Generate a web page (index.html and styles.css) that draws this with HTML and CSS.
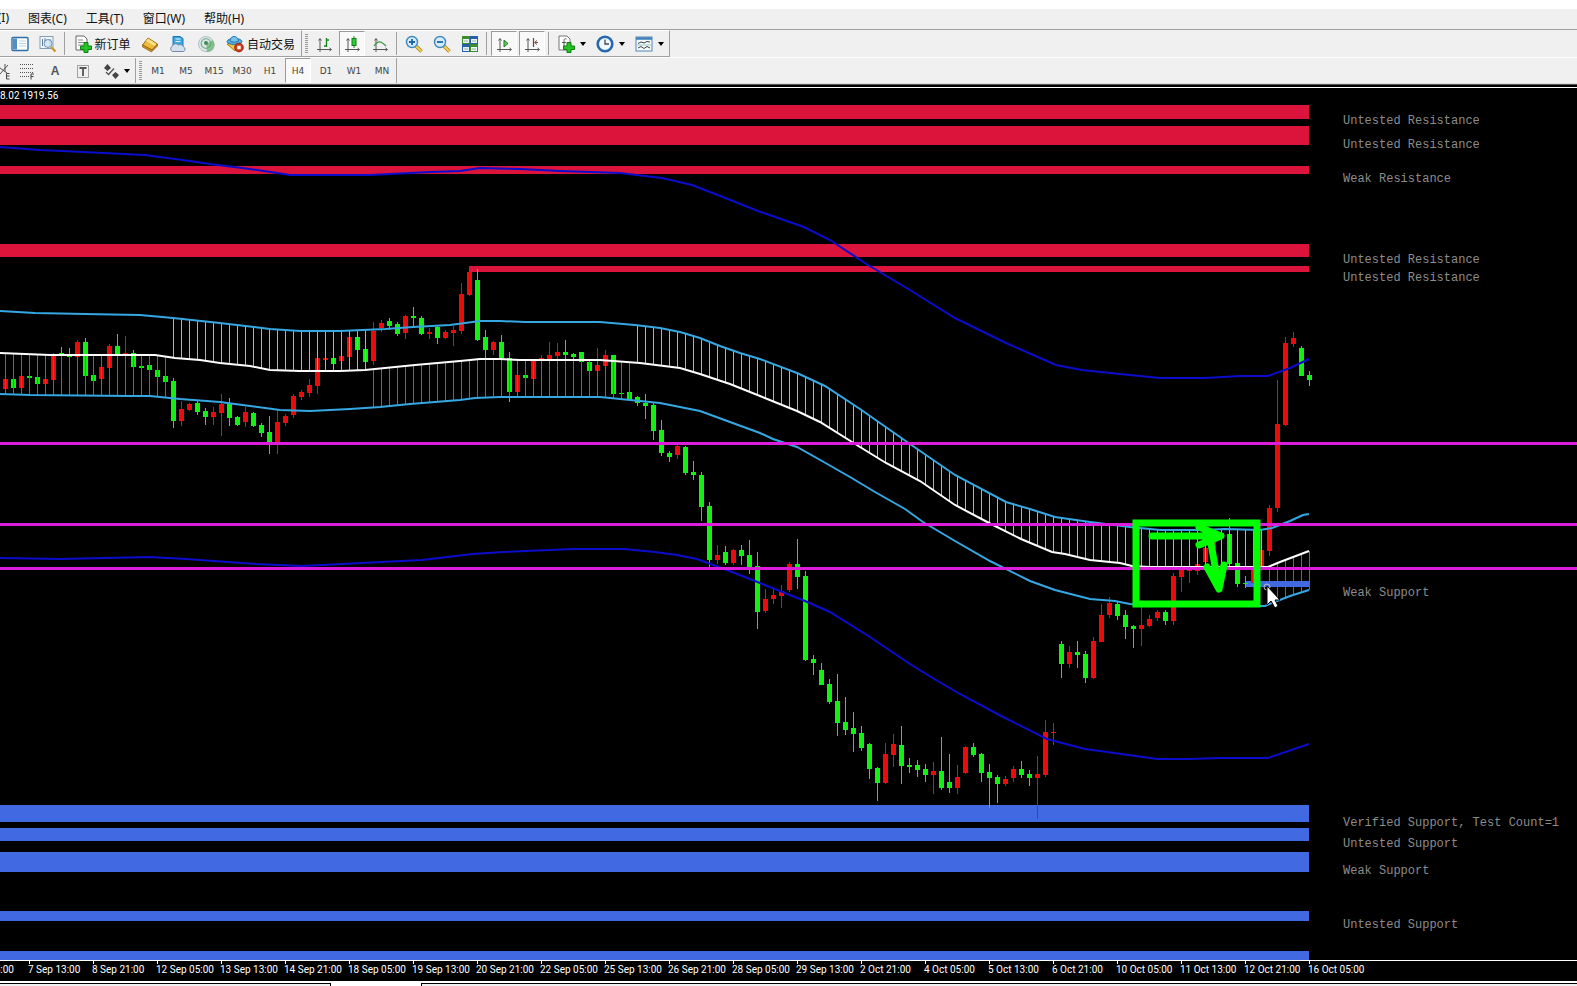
FILE: index.html
```html
<!DOCTYPE html>
<html lang="zh-CN">
<head>
<meta charset="utf-8">
<title>Chart</title>
<link rel="stylesheet" href="styles.css">
</head>
<body>
<div class="titlebar"></div>
<nav class="menu">
  <button class="menu-item menu-cut">(I)</button>
  <button class="menu-item">图表(C)</button>
  <button class="menu-item">工具(T)</button>
  <button class="menu-item">窗口(W)</button>
  <button class="menu-item">帮助(H)</button>
</nav>
<div class="bar">
  <div class="group group-main">
    <button class="tool" aria-label="Navigator"><svg viewBox="0 0 18 18"><rect x="1" y="2.500" width="16" height="13" rx="1" fill="#fff" stroke="#2f6ea5" stroke-width="1.400"/><rect x="2" y="3.500" width="4" height="11" fill="#4f8fc4"/><path d="M8 6h7M8 8.500h7M8 11h7" stroke="#b9d3e8"/></svg></button>
    <button class="tool" aria-label="Strategy tester"><svg viewBox="0 0 18 18"><rect x="1" y="1.500" width="13" height="12" fill="#f4f8fb" stroke="#7f9db5"/><path d="M3.500 4v7M6 3v5M11 4v7" stroke="#5d7f9c"/><circle cx="9" cy="8.500" r="4" fill="#cfe4f3" fill-opacity=".8" stroke="#6a94b3"/><path d="M12 12l4.500 4.500" stroke="#c9982c" stroke-width="2.400"/></svg></button>
    <span class="sep"></span>
    <button class="tool tool-text"><svg viewBox="0 0 18 18"><path d="M2 1h8l3 3v11H2z" fill="#fff" stroke="#666"/><path d="M4 5h5M4 7.500h7M4 10h5" stroke="#8a8a8a"/><path d="M10 7.500h4v3.500h3.500v3.500H14v3h-4v-3H6.500V11H10z" fill="#25c425" stroke="#0d7d14"/></svg><span>新订单</span></button>
    <button class="tool" aria-label="MetaEditor"><svg viewBox="0 0 18 18"><path d="M1.500 10L7 3l9.500 6-5.500 6z" fill="#edba3a" stroke="#9c6a12"/><path d="M7 3.500l8.500 5.500-2 2L5 6z" fill="#ffe28a"/><path d="M1.500 10v2l9 5 6-6V9L11 15z" fill="#c98a1c" stroke="#8a5c10" stroke-width=".6"/></svg></button>
    <button class="tool" aria-label="Data center"><svg viewBox="0 0 18 18"><path d="M4 1.500h7l3 2V11H4z" fill="#3aa5e3" stroke="#1d76b0"/><path d="M6.500 4h5M6.500 6.500h5" stroke="#e8f6ff"/><path d="M3.500 16.500a3 3 0 0 1 0-5.500 3.500 3.500 0 0 1 6-1 3.500 3.500 0 0 1 5 2 2.400 2.400 0 0 1 0 4.500z" fill="#d5e0ee" stroke="#7288a8"/></svg></button>
    <button class="tool" aria-label="Signals"><svg viewBox="0 0 18 18"><circle cx="9" cy="9" r="7.500" fill="#dfe9e6" stroke="#a9bfc9"/><circle cx="9" cy="8.500" r="4.800" fill="none" stroke="#7fae9a" stroke-width="1.300"/><path d="M9 8l1 9a7 7 0 0 0 5.500-12A8 8 0 0 1 9 8z" fill="#57a85c" opacity=".6"/><circle cx="9" cy="8" r="2" fill="#3d8c58"/></svg></button>
    <button class="tool tool-text"><svg viewBox="0 0 18 18"><path d="M1 9l8 7 6-6-5-3z" fill="#f0c340" stroke="#aa7b17"/><ellipse cx="8.500" cy="6.500" rx="7.500" ry="3" fill="#55aee0" stroke="#2674ab"/><path d="M4 6c0-6 8-6 8.500 0-2 1.500-6.500 1.500-8.500 0z" fill="#74c4ee" stroke="#2674ab"/><circle cx="13" cy="12.500" r="4.300" fill="#d33a1e" stroke="#96200c"/><rect x="11.300" y="10.800" width="3.400" height="3.400" fill="#fff"/></svg><span>自动交易</span></button>
  </div>
  <div class="group">
    <span class="grip"></span>
    <button class="tool" aria-label="Bar chart"><svg viewBox="0 0 18 18"><path d="M5 4v13M2 14.500h14M3.500 5.500L5 3.500l1.500 2M14.500 13l2 1.500-2 1.500" fill="none" stroke="#555"/><path d="M11.500 3v9M9 11h2.500M11.500 5H14" fill="none" stroke="#16891c" stroke-width="1.400"/></svg></button>
    <button class="tool pressed" aria-label="Candlesticks"><svg viewBox="0 0 18 18"><path d="M5 4v13M2 14.500h14M3.500 5.500L5 3.500l1.500 2M14.500 13l2 1.500-2 1.500" fill="none" stroke="#555"/><path d="M11 1v12" stroke="#16891c"/><rect x="9" y="3.500" width="4" height="7" fill="#2bd035" stroke="#0e7c14"/></svg></button>
    <button class="tool" aria-label="Line chart"><svg viewBox="0 0 18 18"><path d="M5 4v13M2 14.500h14M3.500 5.500L5 3.500l1.500 2M14.500 13l2 1.500-2 1.500" fill="none" stroke="#555"/><path d="M3 11c4-6 7-5 12 0" fill="none" stroke="#3b9a40" stroke-width="1.300"/></svg></button>
    <span class="sep"></span>
    <button class="tool" aria-label="Zoom in"><svg viewBox="0 0 18 18"><path d="M11 11l5.500 5.500" stroke="#a8801c" stroke-width="3.600"/><path d="M11 11l5.500 5.500" stroke="#f3d154" stroke-width="2"/><circle cx="7" cy="7" r="5.500" fill="#d4ecfb" stroke="#3f87bd" stroke-width="1.400"/><path d="M4 7h6M7 4v6" stroke="#1c66a8" stroke-width="1.800"/></svg></button>
    <button class="tool" aria-label="Zoom out"><svg viewBox="0 0 18 18"><path d="M11 11l5.500 5.500" stroke="#a8801c" stroke-width="3.600"/><path d="M11 11l5.500 5.500" stroke="#f3d154" stroke-width="2"/><circle cx="7" cy="7" r="5.500" fill="#d4ecfb" stroke="#3f87bd" stroke-width="1.400"/><path d="M4 7h6" stroke="#1c66a8" stroke-width="1.800"/></svg></button>
    <button class="tool" aria-label="Tile windows"><svg viewBox="0 0 18 18"><path d="M1 1h8v8H1zM9 9h8v8H9z" fill="#3e8c2c"/><path d="M9 1h8v8H9zM1 9h8v8H1z" fill="#2560a8"/><path d="M2 4h6v4H2zM10 4h6v4h-6zM2 12h6v4H2zM10 12h6v4h-6z" fill="#e9f3fa"/><path d="M3 6h4M11 6h4M3 14h4M11 14h4" stroke="#8fb88a"/></svg></button>
    <span class="sep"></span>
    <button class="tool pressed" aria-label="Auto scroll"><svg viewBox="0 0 18 18"><path d="M5 4v13M2 14.500h14M3.500 5.500L5 3.500l1.500 2M14.500 13l2 1.500-2 1.500" fill="none" stroke="#555"/><path d="M9 5l4 3.500L9 12z" fill="#5ccb61" stroke="#1d7f22"/></svg></button>
    <button class="tool pressed" aria-label="Chart shift"><svg viewBox="0 0 18 18"><path d="M5 4v13M2 14.500h14M3.500 5.500L5 3.500l1.500 2M14.500 13l2 1.500-2 1.500" fill="none" stroke="#555"/><path d="M10.500 3v9" stroke="#555" stroke-width="1.300"/><path d="M15 7.500h-3M14 5.500l-2.500 2L14 9.500" fill="none" stroke="#8c4a38"/></svg></button>
    <span class="sep"></span>
    <button class="tool tool-drop" aria-label="Indicators"><svg viewBox="0 0 18 18"><path d="M2 1h8l3 3v11H2z" fill="#fff" stroke="#777"/><path d="M9.500 4C7 3 7 5 7 7v5M5 7.500h4" fill="none" stroke="#555"/><path d="M10 7.500h4v3.500h3.500v3.500H14v3h-4v-3H6.500V11H10z" fill="#25c425" stroke="#0d7d14"/></svg><i class="caret"></i></button>
    <button class="tool tool-drop" aria-label="Periods"><svg viewBox="0 0 18 18"><circle cx="9" cy="9" r="7.300" fill="#f2f7fb" stroke="#2468ad" stroke-width="2.600"/><path d="M9 4.500V9h4" fill="none" stroke="#445" stroke-width="1.300"/></svg><i class="caret"></i></button>
    <button class="tool tool-drop" aria-label="Templates"><svg viewBox="0 0 18 18"><rect x="1" y="2" width="16" height="14" fill="#f6fafd" stroke="#4e86b5"/><path d="M1 3.500h16" stroke="#3f7fb8" stroke-width="2.500"/><path d="M3 8.500l3-1.500 3 1 3-1.500 3 .5M3 13l3-1.500 3 2 3-2 3 1.500" fill="none" stroke="#444"/><path d="M2 10h14" stroke="#9cb"/></svg><i class="caret"></i></button>
  </div>
</div>
<div class="bar bar-second">
  <div class="group group-lines">
    <button class="tool tool-half" aria-label="Channel"><svg viewBox="0 0 18 18"><path d="M6 12l8-9M6 6l7 5M11 2v8" stroke="#555" fill="none"/><path d="M15.500 11.500h-3v5.500h3M12.500 14h3" fill="none" stroke="#444"/></svg></button>
    <button class="tool" aria-label="Fibonacci"><svg viewBox="0 0 18 18"><path d="M2 2.500h14M2 6.500h14M2 10.500h14M2 14.500h9" stroke="#555" stroke-dasharray="1 1"/><path d="M16 12h-3v5.500M13 14.500h2.500" fill="none" stroke="#444"/></svg></button>
    <button class="tool letter">A</button>
    <button class="tool" aria-label="Text label"><svg viewBox="0 0 18 18"><rect x="3.500" y="3.500" width="11" height="12" fill="none" stroke="#555" stroke-dasharray="1 1"/><path d="M5.500 6h7M9 6v8" fill="none" stroke="#555" stroke-width="1.800"/></svg></button>
    <button class="tool tool-drop" aria-label="Arrows"><svg viewBox="0 0 18 18"><path d="M2 6l3.500-4L9 6 5.500 9zM10 13l3.500-3 3.500 3-3.500 4z" fill="#444"/><path d="M4 10l2.500 2.500L12 6.500" stroke="#555" stroke-width="1.300" fill="none"/></svg><i class="caret"></i></button>
  </div>
  <div class="group group-time">
    <span class="grip"></span>
    <button class="tool">M1</button><button class="tool">M5</button><button class="tool">M15</button><button class="tool">M30</button><button class="tool">H1</button><button class="tool pressed">H4</button><button class="tool">D1</button><button class="tool">W1</button><button class="tool">MN</button>
  </div>
</div>
<main class="chart">
  <svg class="plot" id="plot" viewBox="0 88 1577 893" role="img" aria-label="H4 price chart"></svg>
</main>
<footer class="tabs"><div class="tab tab-first"></div><div class="tab tab-rest"></div></footer>
<script src="chart.js"></script>
</body>
</html>
```
FILE: styles.css
```css
* { box-sizing: border-box; }
body {
  margin: 0;
  min-height: 100vh;
  display: flex;
  flex-direction: column;
  overflow-x: hidden;
  background: #f0f0f0;
  color: #111;
  font-family: "Noto Sans", "Noto Sans CJK SC", sans-serif;
  font-size: 12px;
}
button {
  border: 1px solid transparent;
  margin: 0;
  padding: 0;
  background: none;
  color: inherit;
  font: inherit;
}
.titlebar { height: 9px; background: #fff; }
.menu {
  display: flex;
  gap: 19px;
  height: 21px;
  border-bottom: 1px solid #a0a0a0;
}
.menu-item { line-height: 18px; border: 0; white-space: nowrap; }
.menu-cut { width: 9px; display: flex; justify-content: flex-end; }
.bar {
  display: flex;
  height: 27px;
}
.bar-second {
  border-top: 1px solid #fff;
  border-bottom: 1px solid #ddd;
}
.group {
  display: flex;
  align-items: stretch;
  border-right: 1px solid #a0a0a0;
  border-bottom: 1px solid #a0a0a0;
  border-top: 1px solid #fff;
}
.bar-second .group { border-top: 0; border-bottom: 0; }
.group-main { width: 302px; padding-left: 6px; }
.group-lines { width: 136px; }
.tool {
  width: 28px;
  display: flex;
  align-items: center;
  justify-content: center;
  white-space: nowrap;
}
.tool svg { width: 18px; height: 18px; flex: none; }
.tool-text { width: auto; gap: 3px; padding: 0 5px; }
.tool-drop { width: 39px; gap: 5px; }
.tool-half { width: 13px; justify-content: flex-end; }
.group-lines .tool-drop { gap: 4px; width: 38px; }
.letter { font: bold 12px "Liberation Sans", sans-serif; color: #555; }
.pressed {
  width: 26px;
  margin: 0 1px;
  border-color: #999 #fff #fff #999;
  background: #f9f9f9;
}
.group-time .tool { font: 9px "DejaVu Sans", sans-serif; color: #444; }
.caret {
  border: 3px solid transparent;
  border-top: 4px solid #000;
  border-bottom: 0;
}
.sep { width: 1px; margin: 1px 3px 1px 2px; background: #a0a0a0; }
.grip {
  width: 3px;
  margin: 3px 2px 3px 3px;
  background: repeating-linear-gradient(#999 0 1px, #f0f0f0 1px 2px);
}
.chart {
  border-top: 1px solid #555;
  background: #000;
  padding-top: 2px;
}
.plot {
  display: block;
  width: 100%;
  height: auto;
  border-top: 1px solid #fff;
}
.tabs {
  display: flex;
  flex: 1;
  gap: 90px;
  min-height: 5px;
  padding-top: 2px;
  background: #fff;
}
.tab { border-top: 1px solid #000; background: #f0f0f0; }
.tab-first { width: 21%; border-right: 1px solid #000; }
.tab-rest { flex: 1; border-left: 1px solid #000; }
.band, .hline, .hatch, .candle { shape-rendering: crispEdges; }
.resistance { fill: #dc143c; }
.support { fill: #4169e1; }
.hline { fill: #dc1edc; }
.up { fill: #e80c0c; }
.down { fill: #14f014; }
.hatch-up { fill: #68d0c4; }
.hatch-down { fill: #a83ca8; }
.curve { fill: none; stroke-width: 2; }
.outer { stroke: #0c0ccc; }
.inner { stroke: #35a8e4; }
.middle { stroke: #fff; }
.mark { fill: none; stroke: #00ff00; stroke-linecap: round; stroke-linejoin: round; stroke-width: 7; }
.mark-box { stroke-linejoin: miter; }
.axis { fill: #fff; shape-rendering: crispEdges; }
.level-text { fill: #8c8c8c; font: 12px "Liberation Mono", monospace; }
.axis-text { fill: #fff; font: 10px Roboto, sans-serif; }
.pointer { fill: #fff; stroke: #000; stroke-width: 1; }
.pointer-ring { fill: none; stroke: #bbb; }
```
FILE: chart.js
```js
const plot = document.getElementById('plot');
const NS = 'http://www.w3.org/2000/svg';
function add(tag, attrs, text) {
  const el = document.createElementNS(NS, tag);
  for (const key in attrs) el.setAttribute(key, attrs[key]);
  if (text) el.textContent = text;
  plot.appendChild(el);
}
function rect(cls, x, y, width, height) {
  add('rect', { class: cls, x, y, width, height });
}

const STEP = 8, FIRST = 5, LAST = 1309;

// Price zones: x, y, height
[[0,105,14],[0,126,19],[0,166,8],[0,244,13],[469,266,6]]
  .forEach(([x, y, h]) => rect('band resistance', x, y, LAST - x, h));
[[0,805,17],[0,828,13],[0,852,20],[0,911,10],[0,951,9],[1246,581,6]]
  .forEach(([x, y, h]) => rect('band support', x, y, LAST - x, h));

// Candles, one per step: direction, high, body top, body bottom, low
const candles = `r 375 379 389 393|g 376 379 388 392|r 375 376 388 390|g 376 376 378 378|g 376 377 384 386|r 377 379 384 386|r 353 354 380 382|g 347 353 355 357|g 348 355 357 357|r 340 342 357 358|g 338 342 376 378|g 374 375 381 382|r 365 367 379 381|r 344 346 368 368|g 334 346 355 356|r 336 353 355 356|g 350 353 367 367|g 366 366 368 368|g 364 365 370 372|g 369 370 377 378|g 375 376 382 383|g 378 381 421 428|r 401 409 421 426|r 403 404 410 411|g 401 403 412 415|g 408 411 417 425|r 407 412 417 425|r 394 404 413 436|g 398 404 418 426|g 416 417 425 426|r 407 412 422 427|g 412 413 426 427|g 423 425 433 437|g 416 432 444 454|r 410 422 445 454|r 414 416 423 426|r 394 396 415 418|r 390 392 397 400|r 379 385 393 397|r 358 358 386 394|r 358 358 360 360|g 358 358 364 367|r 355 356 361 362|r 337 337 357 358|g 332 337 350 368|g 340 349 362 365|r 322 331 361 365|r 320 323 328 332|g 318 321 326 330|g 322 324 334 336|r 315 316 333 339|g 307 316 318 327|g 316 318 334 335|r 328 332 334 339|g 326 327 338 344|r 330 332 338 339|r 326 330 333 346|r 283 294 331 334|r 272 272 295 296|g 269 280 340 341|g 330 337 350 358|r 341 342 350 355|g 335 342 358 359|g 352 358 392 402|r 374 375 392 393|g 374 375 378 379|r 360 361 379 380|r 355 358 360 362|r 342 355 359 361|r 343 352 356 359|g 340 352 355 360|g 353 354 357 359|g 352 352 362 363|g 361 362 371 373|r 348 365 371 373|r 350 355 366 367|g 355 355 394 394|g 393 393 394 395|g 391 392 400 400|g 396 397 403 406|g 394 403 406 419|g 402 405 431 440|g 420 430 453 456|g 451 453 457 462|r 444 446 455 459|g 446 447 473 475|g 461 472 475 480|g 472 475 507 521|g 502 506 560 567|r 545 555 560 564|g 546 552 563 565|r 549 550 563 565|g 545 550 556 565|g 540 555 567 574|g 552 566 612 629|r 589 599 611 613|r 588 595 599 604|r 585 591 596 608|r 562 564 590 592|g 539 564 577 589|g 571 576 660 661|g 655 659 663 675|g 663 670 685 685|g 679 684 702 704|g 674 701 723 736|g 697 722 730 735|g 712 728 734 752|g 726 733 748 751|g 743 744 769 779|g 767 768 783 801|r 743 754 783 784|r 734 744 755 767|g 726 745 766 784|g 758 765 767 773|g 760 765 770 777|g 764 769 775 782|r 762 771 775 794|g 737 771 788 790|g 754 782 788 793|r 765 777 788 794|r 746 747 773 774|g 743 747 755 757|g 753 754 773 782|g 764 772 778 808|g 775 777 784 803|r 776 779 784 786|r 766 769 778 782|g 761 769 775 778|g 770 774 778 786|r 756 774 778 819|r 720 732 775 777|r 723 732 733 745|g 641 644 664 678|r 646 652 664 668|g 641 652 655 668|g 651 654 678 683|r 637 641 678 679|r 604 615 642 642|r 597 603 615 618|g 602 604 616 620|g 610 615 627 639|g 625 626 629 648|r 607 625 629 646|r 615 619 626 627|r 610 612 618 621|g 610 612 621 625|r 573 576 621 625|r 568 570 577 592|r 567 569 571 583|r 561 564 571 575|r 546 548 562 564|r 530 536 548 550|g 530 533 536 545|g 518 534 564 565|g 562 563 584 587|g 576 583 584 588|r 566 567 583 584|r 548 550 570 571|r 505 508 551 556|r 380 424 508 512|r 337 343 425 426|r 332 338 344 347|g 346 348 376 376|g 371 375 380 386`.split('|');
candles.forEach((row, i) => {
  const [dir, ...p] = row.split(' ');
  const [high, top, bottom, low] = p.map(Number);
  const x = FIRST + i * STEP;
  const cls = 'candle ' + (dir === 'r' ? 'up' : 'down');
  rect(cls, x, high, 1, low - high);
  rect(cls, x - 2, top, 5, bottom - top);
});

const curves = {
  outerTop: [0,147,40,150,83,152,145,155,190,161,210,164,250,169,290,175,370,175,430,172,460,171,480,168,520,169,560,171,620,173,662,178,692,185,723,197,758,211,804,227,830,240,868,265,910,290,955,318,1006,343,1056,365,1082,370,1120,374,1160,378,1205,378,1240,376,1268,376,1290,368,1309,359],
  outerLow: [0,558,60,559,150,557,186,559,256,564,302,566,362,563,422,560,473,554,503,552,573,549,624,549,655,552,677,555,697,559,727,570,755,581,780,591,805,601,830,612,870,637,910,664,936,680,960,694,1005,718,1047,739,1085,749,1100,751,1157,759,1190,759,1220,758,1268,758,1309,744],
  innerTop: [0,311,35,313,85,314,140,315,173,318,220,323,270,329,300,331,340,331,385,329,413,327,450,325,480,321,500,321,525,322,600,322,635,325,660,328,680,332,700,338,720,346,740,353,760,359,797,373,825,386,860,409,910,444,955,475,1006,502,1030,509,1055,517,1090,522,1130,527,1160,530,1200,530,1225,529,1260,530,1272,528,1290,521,1303,515,1309,514],
  middle: [0,353,50,355,155,355,175,358,200,360,220,363,250,366,270,370,300,371,340,371,365,370,415,365,460,361,480,359,500,359,520,360,600,360,640,363,680,368,700,374,730,384,760,396,797,411,820,422,860,447,886,463,920,481,955,505,991,524,1021,539,1052,552,1065,554,1090,560,1120,563,1132,566,1150,567,1268,567,1280,562,1309,551],
  innerLow: [0,394,30,395,130,396,150,396,180,399,220,402,250,406,280,410,310,411,350,409,380,407,410,404,460,400,475,398,500,397,600,397,640,401,660,403,700,411,730,422,760,433,773,439,797,447,822,461,850,477,875,492,905,509,923,522,955,541,990,561,1030,581,1055,590,1090,599,1115,601,1130,604,1160,606,1265,606,1272,603,1290,596,1309,590]
};
function at(pts, x) {
  let i = 0;
  while (i < pts.length - 4 && pts[i + 2] < x) i += 2;
  const t = (x - pts[i]) / (pts[i + 2] - pts[i]);
  return Math.round(pts[i + 1] + t * (pts[i + 3] - pts[i + 1]));
}

// Cloud hatching between the middle line and one inner line
function hatch(cls, from, to, a, b) {
  for (let x = from; x <= to; x += STEP) {
    const y = at(a, x);
    rect('hatch ' + cls, x, y, 1, at(b, x) - y);
  }
}
hatch('hatch-down', 5, 165, curves.middle, curves.innerLow);
hatch('hatch-up', 173, 365, curves.innerTop, curves.middle);
hatch('hatch-down', 373, 629, curves.middle, curves.innerLow);
hatch('hatch-up', 637, 1261, curves.innerTop, curves.middle);
hatch('hatch-down', 1269, 1309, curves.middle, curves.innerLow);

[['outer', 'outerTop'], ['outer', 'outerLow'], ['inner', 'innerTop'], ['inner', 'innerLow'], ['middle', 'middle']]
  .forEach(([cls, key]) => add('polyline', { class: 'curve ' + cls, points: curves[key].join(' ') }));

[442, 523, 567].forEach(y => rect('hline', 0, y, 1577, 3));

// Hand-drawn box and arrows
add('rect', { class: 'mark mark-box', x: 1136, y: 523, width: 121, height: 81 });
add('path', { class: 'mark', d: 'M1152 536H1220M1199 527L1221 536L1199 545' });
add('path', { class: 'mark', d: 'M1209 532L1219 589M1207 567L1219 589L1224 565' });
add('circle', { class: 'pointer-ring', cx: 1267, cy: 587, r: 3 });
add('path', { class: 'pointer', d: 'M1267 586V605L1271 601L1275 608L1278 606L1275 600H1280Z' });

[[124,'Untested Resistance'],[148,'Untested Resistance'],[182,'Weak Resistance'],[263,'Untested Resistance'],[281,'Untested Resistance'],[596,'Weak Support'],[826,'Verified Support, Test Count=1'],[847,'Untested Support'],[874,'Weak Support'],[928,'Untested Support']]
  .forEach(([y, text]) => add('text', { class: 'level-text', x: 1343, y }, text));
add('text', { class: 'axis-text', x: 0, y: 99 }, '8.02 1919.56');

rect('axis', 0, 960, 1577, 1);
add('text', { class: 'axis-text', x: 14, y: 973, 'text-anchor': 'end' }, '5:00');
['7 Sep 13:00','8 Sep 21:00','12 Sep 05:00','13 Sep 13:00','14 Sep 21:00','18 Sep 05:00','19 Sep 13:00','20 Sep 21:00','22 Sep 05:00','25 Sep 13:00','26 Sep 21:00','28 Sep 05:00','29 Sep 13:00','2 Oct 21:00','4 Oct 05:00','5 Oct 13:00','6 Oct 21:00','10 Oct 05:00','11 Oct 13:00','12 Oct 21:00','16 Oct 05:00']
  .forEach((text, i) => {
    const x = 29 + i * 64;
    rect('axis', x, 961, 1, 3);
    add('text', { class: 'axis-text', x: x - 1, y: 973 }, text);
  });
```
